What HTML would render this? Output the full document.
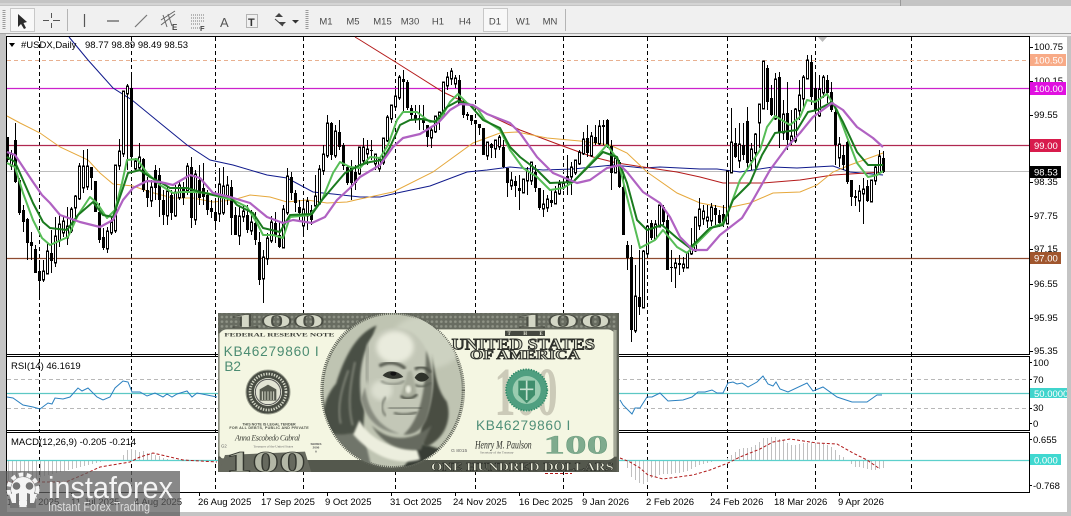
<!DOCTYPE html>
<html><head><meta charset="utf-8"><title>USDX Daily</title>
<style>
html,body{margin:0;padding:0;background:#c4c4c4;width:1071px;height:516px;overflow:hidden}
svg{display:block}
text{font-family:"Liberation Sans",sans-serif}
.t{font-size:9.5px;fill:#000}
.b{font-size:9.5px;fill:#4a4a4a;text-anchor:middle}
.w{font-size:9.5px;fill:#fff}
.s{font-family:"Liberation Serif",serif;font-weight:bold}
</style></head><body>
<svg xmlns="http://www.w3.org/2000/svg" width="1071" height="516" viewBox="0 0 1071 516">
<defs>
<filter id="bl"><feGaussianBlur stdDeviation="3"/></filter>
<filter id="bl2"><feGaussianBlur stdDeviation="7"/></filter>
<clipPath id="ov"><ellipse cx="218" cy="235" rx="212" ry="232"/></clipPath>
<clipPath id="note"><rect x="218" y="313" width="401" height="159"/></clipPath>
<pattern id="eng" width="14" height="14" patternUnits="userSpaceOnUse"><rect width="14" height="14" fill="#686c61"/><circle cx="7" cy="7" r="4" fill="#8f9386"/></pattern>
<path id="wb" d="M11 155V165M43 272V279M47 252V273M55 237V262M59 225V240M63 222V232M67 227V237M71 210V230M75 197V207M79 167V198M83 167V187M87 167V186M107 232V248M111 223V232M115 166V230M119 152V165M123 92V153M127 87V93M135 162V168M139 158V167M151 188V200M167 192V215M175 193V215M179 186V197M187 167V190M195 175V219M219 185V213M223 187V212M227 186V195M239 217V235M243 212V216M251 223V230M263 258V278M267 239V258M271 223V240M283 210V247M287 177V212M303 210V225M307 202V215M315 197V205M319 170V203M323 155V170M327 124V155M335 132V155M359 148V173M363 148V160M367 150V153M375 155V163M379 160V168M383 139V162M387 118V140M391 106V118M395 97V106M399 78V97M431 131V137M435 117V131M439 113V118M443 83V113M447 78V85M451 72V78M455 79V83M487 143V155M495 141V148M499 138V146M511 181V185M523 180V192M527 172V180M531 163V180M543 205V208M547 200V207M555 193V203M559 185V193M563 184V187M571 168V176M575 161V172M579 153V163M583 140V153M591 137V155M599 127V143M615 159V172M635 297V330M643 252V307M647 227V253M655 225V238M659 206V226M675 264V267M683 265V267M687 253V267M691 247V253M695 218V250M699 210V225M703 212V218M707 218V220M711 208V220M727 172V223M731 143V172M739 145V160M751 150V160M755 135V152M759 105V122M763 62V108M775 80V118M783 115V132M791 137V140M795 110V140M799 96V110M803 78V98M807 61V78M819 90V115M823 78V92M839 145V157M859 192V200M863 190V193M871 181V201M875 168V180M879 157V172"/>
</defs>

<!-- window -->
<rect width="1071" height="516" fill="#c4c4c4"/>
<rect x="0" y="3" width="900" height="2" fill="#d4d4d4"/>
<rect x="900" y="0" width="1" height="6" fill="#999"/>
<rect x="0" y="6" width="1071" height="27" fill="#f0f0f0"/>
<rect x="0" y="33" width="1071" height="1" fill="#a4a4a4"/>
<rect x="0" y="34" width="1071" height="2" fill="#ececec"/>
<rect x="0" y="34" width="6" height="2" fill="#c4c4c4"/>

<!-- toolbar -->
<path d="M4 10V30M307 10V30" stroke="#9a9a9a" stroke-width="3" stroke-dasharray="1 1"/>
<rect x="10.500" y="8.500" width="24" height="23" fill="#f8f8f8" stroke="#c8c8c8"/>
<path d="M18 14L18 27L21 24L24 29L26 28L23.500 23L27 22Z" fill="#2c2c2c"/>
<path d="M43 20.500H49M53 20.500H60M51.500 13V18M51.500 23V28" stroke="#555" fill="none"/>
<path d="M67.500 9V31" stroke="#b4b4b4"/>
<path d="M84.500 14V27" stroke="#555" stroke-width="1.200"/>
<path d="M107 21H119" stroke="#555" stroke-width="1.200"/>
<path d="M135 27L147 15" stroke="#777" stroke-width="1.200"/>
<path d="M161 25L175 14M161 20L175 11M163 15L167 27M168 14L172 26" stroke="#666" fill="none"/>
<text x="172" y="30" font-size="8" fill="#444" font-weight="bold">E</text>
<path d="M191 15H204M191 18H204M191 21H204M191 24H200M191 28H200" stroke="#777" stroke-dasharray="1 1"/>
<text x="200" y="31" font-size="7.500" fill="#444" font-weight="bold">F</text>
<text x="220" y="27" font-size="13" fill="#555">A</text>
<rect x="246.500" y="14.500" width="11" height="13" fill="none" stroke="#777" stroke-dasharray="1 1"/>
<text x="248" y="26" font-size="11" font-weight="bold" fill="#333">T</text>
<path d="M275 17L279 13L283 17ZM278 22L282 26L286 22Z" fill="#444"/><path d="M275 19L283 26" stroke="#444"/>
<path d="M292 20H299L295.500 23.500Z" fill="#333"/>
<g class="b"><text class="b" x="326" y="24.500">M1</text><text class="b" x="353" y="24.500">M5</text><text class="b" x="382.500" y="24.500">M15</text><text class="b" x="410" y="24.500">M30</text><text class="b" x="438" y="24.500">H1</text><text class="b" x="465" y="24.500">H4</text></g>
<rect x="483.500" y="8.500" width="24" height="23" fill="#f8f8f8" stroke="#c8c8c8"/>
<text class="b" x="495" y="24.500">D1</text><text class="b" x="523" y="24.500">W1</text><text class="b" x="550" y="24.500">MN</text>
<path d="M565.500 9V31" stroke="#b4b4b4"/>

<!-- panels -->
<rect x="7" y="37" width="1060" height="475" fill="#fff"/>
<path d="M6.500 36.500H1029.500V354.500H6.500ZM6.500 356.500H1029.500V430.500H6.500ZM6.500 432.500H1029.500V492.500H6.500ZM6.500 36V492" fill="none" stroke="#000"/>
<path d="M1029 47h4M1029 81h4M1029 115h4M1029 148h4M1029 182h4M1029 216h4M1029 249h4M1029 284h4M1029 318h4M1029 351h4M1029 362h3M1029 379h3M1029 408h3M1029 423h3M1029 439h3M1029 485h3" stroke="#000" transform="translate(0 .5)"/>
<!-- grid -->
<path d="M39.500 37V492M131.500 37V492M215.500 37V492M303.500 37V492M395.500 37V492M475.500 37V492M563.500 37V492M647.500 37V492M727.500 37V492M815.500 37V492M911.500 37V492" stroke="#000" stroke-dasharray="4 3"/>
<!-- hlines -->
<path d="M7 60.500H1029" stroke="#e8b090" stroke-dasharray="4 3"/>
<path d="M7 88.500H1029" stroke="#cc22cc" stroke-width="1.200"/>
<path d="M7 145.500H1029" stroke="#b02850" stroke-width="1.200"/>
<path d="M7 171.500H1029" stroke="#bdbdbd"/>
<path d="M7 258.500H1029" stroke="#8e4a30" stroke-width="1.200"/>

<!-- MA thin -->
<polyline fill="none" stroke="#101a8c" points="69,37 88,60 113,88 132,100 160,123 187,145 210,160 233,165 267,175 287,178 313,192 333,194 360,197 380,197 397,193 430,186 467,172 487,170 510,167 543,170 573,169 613,165 643,168 660,167 700,169 717,169 740,172 773,167 797,168 833,166 850,172 883,175"/>
<polyline fill="none" stroke="#b41a1a" points="355,37 360,40 397,63 443,92 460,100 493,117 520,130 560,145 593,157 617,163 643,167 677,172 700,177 723,183 763,183 800,180 833,175 883,172"/>
<polyline fill="none" stroke="#e6a83c" points="7,116 20,123 40,133 60,147 88,160 100,173 113,184 133,186 150,192 173,198 193,198 213,202 233,200 250,195 270,197 287,202 307,200 327,203 347,202 360,199 393,192 433,172 473,143 500,133 517,132 547,138 580,141 610,145 627,153 647,172 677,193 700,203 727,208 750,203 773,193 800,192 817,185 833,172 850,165 883,153"/>

<!-- candles -->
<g transform="translate(.5 0)" shape-rendering="crispEdges">
<path fill="none" stroke="#000" d="M7 137V162M11 150V170M15 123V183M19 178V215M23 205V232M27 218V260M31 232V260M35 245V273M39 260V297M43 260V282M47 243V273M51 230V273M55 217V267M59 213V247M63 217V237M67 207V245M71 207V233M75 195V217M79 163V200M83 150V193M87 149V190M91 167V190M95 181V212M99 203V243M103 228V250M107 227V253M111 217V235M115 165V233M119 139V170M123 92V157M127 84V170M131 73V167M135 158V170M139 143V170M143 158V192M147 177V207M151 180V207M155 165V200M159 168V217M163 190V225M167 187V225M171 190V220M175 185V217M179 180V200M183 182V205M187 163V195M191 157V228M195 170V225M199 165V205M203 163V205M207 190V215M211 200V218M215 198V230M219 168V222M223 167V215M227 176V205M231 180V235M235 207V235M239 207V245M243 205V222M247 205V233M251 210V235M255 212V245M259 232V285M263 250V303M267 233V265M271 216V243M275 212V243M279 222V248M283 205V248M287 168V215M291 172V200M295 190V212M299 200V222M303 200V237M307 197V230M311 205V225M315 175V207M319 165V205M323 145V175M327 115V158M331 122V160M335 125V158M339 120V150M343 143V170M347 165V185M351 160V200M355 165V190M359 148V175M363 138V165M367 140V165M371 140V160M375 155V170M379 160V172M383 140V165M387 115V142M391 106V123M395 90V110M399 75V100M403 70V111M407 80V110M411 105V120M415 105V123M419 105V130M423 105V130M427 125V147M431 128V148M435 117V133M439 113V130M443 83V113M447 72V90M451 68V85M455 75V88M459 75V105M463 100V118M467 112V120M471 115V125M475 120V145M479 124V135M483 128V155M487 143V160M491 143V158M495 140V158M499 135V150M503 140V168M507 168V197M511 172V190M515 176V197M519 175V210M523 180V193M527 167V195M531 163V185M535 165V192M539 188V210M543 190V217M547 195V212M551 190V207M555 186V203M559 180V195M563 178V190M567 155V195M571 162V195M575 160V175M579 150V165M583 132V155M587 125V157M591 132V157M595 125V145M599 120V145M603 120V145M607 119V148M611 140V190M615 158V172M619 160V188M623 175V235M627 241V270M631 245V342M635 265V333M639 250V315M643 250V308M647 225V255M651 220V240M655 220V240M659 205V226M663 205V225M667 215V270M671 250V282M675 258V288M679 255V275M683 257V272M687 253V268M691 228V255M695 218V252M699 198V230M703 205V225M707 205V228M711 203V226M715 205V225M719 210V227M723 205V227M727 172V224M731 108V172M735 128V158M739 123V168M743 123V160M747 107V168M751 143V170M755 133V170M759 105V148M763 61V108M767 65V110M771 85V116M775 73V120M779 72V148M783 100V140M787 82V150M791 110V145M795 108V143M799 80V120M803 75V108M807 55V78M811 55V105M815 72V130M819 75V117M823 75V98M827 75V103M831 82V112M835 110V165M839 137V167M843 145V170M847 141V184M851 180V206M855 190V206M859 185V212M863 178V224M867 180V202M871 180V202M875 165V185M879 150V172M883 151V173"/>
<path fill="none" stroke="#000" stroke-width="3" d="M7 137V160M15 140V182M19 180V213M23 210V222M27 219V243M31 242V246M35 249V273M39 271V281M51 253V261M91 167V178M95 181V212M99 212V240M103 237V248M131 88V157M143 159V190M147 190V198M155 170V188M159 175V200M163 200V215M171 195V213M183 188V198M191 167V218M199 180V198M203 188V197M207 195V210M211 208V212M215 212V221M231 187V218M235 215V235M247 215V230M255 223V240M259 242V280M275 223V235M279 235V247M291 177V193M295 193V203M299 207V213M311 210V220M331 123V155M339 132V147M343 145V166M347 167V183M351 167V183M355 172V183M371 150V151M403 79V82M407 82V108M411 108V115M415 115V120M419 118V120M423 120V123M427 125V137M459 80V105M463 105V115M467 114V116M471 115V121M475 120V124M479 124V128M483 128V155M491 144V148M503 147V167M507 168V183M515 181V186M519 188V191M535 172V188M539 188V208M551 200V203M567 176V182M587 138V153M595 137V143M603 125V127M607 120V147M611 146V173M619 162V187M623 187V235M627 245V258M631 257V330M639 297V307M651 223V238M663 207V222M667 220V270M671 267V268M679 263V265M715 208V215M719 215V223M723 214V223M735 143V157M743 145V155M747 121V163M767 68V102M771 98V115M779 77V132M787 113V140M811 62V97M815 88V110M827 80V93M831 92V110M835 112V145M843 155V165M847 142V182M851 180V197M855 196V198M867 186V201M883 158V172"/>
<use href="#wb" fill="none" stroke="#000" stroke-width="3" stroke-linecap="square"/>
<use href="#wb" fill="none" stroke="#fff" stroke-width="1"/>
</g>

<!-- MA thick -->
<polyline fill="none" stroke="#56bd56" stroke-width="2" stroke-linejoin="round" points="7,163 15,167 23,193 33,220 42,238 50,245 68,237 78,215 90,197 97,203 107,218 115,210 122,183 127,160 137,159 147,173 160,185 173,193 182,192 193,192 207,193 220,197 233,200 247,207 257,223 263,235 273,235 283,238 290,217 310,215 322,200 333,173 340,162 350,167 360,168 370,157 380,158 388,145 397,120 403,112 417,112 430,122 440,120 450,102 458,94 467,103 477,108 485,120 500,130 510,150 523,168 537,177 550,190 563,188 573,182 587,167 607,145 618,160 627,197 640,248 655,240 663,230 677,247 687,253 700,240 713,227 723,223 730,207 740,180 760,150 767,127 775,116 790,125 800,117 807,100 815,102 827,94 837,110 847,137 857,163 868,177 877,175 883,171"/>
<polyline fill="none" stroke="#1a7a1e" stroke-width="2" stroke-linejoin="round" points="7,157 15,162 23,180 33,203 43,222 50,228 67,230 78,215 93,202 103,215 113,217 123,188 128,173 140,170 150,177 160,182 170,188 187,188 200,192 213,195 230,197 237,205 253,213 263,228 280,232 290,215 312,214 322,200 333,187 345,173 360,165 370,162 382,160 390,147 400,125 410,120 422,119 435,122 447,107 458,101 470,105 483,120 500,128 510,147 520,157 537,170 550,183 573,182 590,165 603,152 617,157 627,183 637,220 647,230 662,225 677,238 690,248 700,238 710,228 723,225 733,200 750,183 762,155 775,133 797,130 808,112 817,110 832,102 843,122 857,152 868,165 883,165"/>
<polyline fill="none" stroke="#b062c2" stroke-width="2.200" stroke-linejoin="round" points="7,152 15,155 23,167 33,182 42,195 50,203 60,215 80,222 100,227 113,220 123,200 133,188 147,181 160,182 173,185 190,175 200,178 213,193 230,197 250,203 267,217 283,223 293,220 312,223 325,217 337,200 350,188 360,177 380,165 393,147 403,138 420,134 438,123 450,110 460,104 473,105 487,114 510,123 520,133 537,157 553,173 577,183 590,180 607,168 620,165 627,172 643,192 660,203 670,217 680,237 693,250 707,250 720,235 742,218 753,200 770,170 787,147 800,133 813,117 832,103 843,110 857,127 873,138 883,147"/>
<path d="M818 37H827L822.500 42Z" fill="#bbb"/>

<!-- RSI -->
<path d="M7 379.500H1029M7 408.500H1029" stroke="#b8b8b8" stroke-dasharray="4 3"/>
<path d="M7 393.500H1029" stroke="#5cc8c4" stroke-width="1.200"/>
<polyline fill="none" stroke="#2a80c0" points="7,397 13,398 23,405 33,407 40,409 48,403 52,404 55,398 63,399 70,397 78,388 82,391 88,388 97,397 103,400 110,397 115,388 123,381 128,382 132,392 140,392 147,396 155,393 163,397 167,394 172,397 177,394 187,391 192,397 197,393 207,395 217,397"/>
<polyline fill="none" stroke="#2a80c0" points="620,400 623,405 632,414 635,408 640,408 647,397 652,397 660,393 668,401 683,400 692,397 698,392 705,392 712,390 717,393 723,393 728,383 733,382 737,384 742,383 748,387 757,382 763,376 768,384 773,386 776,382 780,389 788,392 807,383 813,391 823,387 837,397 852,402 867,402 877,395 882,395"/>

<!-- MACD -->
<path stroke="#c0c0c0" fill="none" d="M8.500 460V482M12.500 460V482M16.500 460V481M20.500 460V480M24.500 460V480M28.500 460V479M32.500 460V478M36.500 460V478M40.500 460V477M44.500 460V476M48.500 460V475M52.500 460V474M56.500 460V473M60.500 460V472M64.500 460V471M68.500 460V470M72.500 460V469M76.500 460V468M80.500 460V467M84.500 460V466M88.500 460V465M92.500 460V464M96.500 460V463M100.500 460V462M104.500 460V461M123.500 460V455M127.500 460V450M131.500 460V449M135.500 460V450M139.500 460V452M143.500 460V451M147.500 460V453M151.500 460V453M155.500 460V455M159.500 460V456M163.500 460V458M167.500 460V459M627.500 460V468M631.500 460V477M635.500 460V480M639.500 460V483M643.500 460V484M647.500 460V482M651.500 460V478M655.500 460V477M659.500 460V475M663.500 460V474M667.500 460V474M671.500 460V474M675.500 460V473M679.500 460V473M683.500 460V472M687.500 460V471M691.500 460V469M695.500 460V467M699.500 460V465M703.500 460V464M707.500 460V463M711.500 460V462M715.500 460V461M727.500 460V458M731.500 460V455M735.500 460V452M739.500 460V449M743.500 460V448M747.500 460V448M751.500 460V447M755.500 460V445M759.500 460V442M763.500 460V438M767.500 460V438M771.500 460V437M775.500 460V437M779.500 460V439M783.500 460V440M787.500 460V443M791.500 460V445M795.500 460V445M799.500 460V444M803.500 460V443M807.500 460V443M811.500 460V442M815.500 460V443M819.500 460V443M823.500 460V444M827.500 460V445M831.500 460V447M835.500 460V450M839.500 460V455M843.500 460V457M851.500 460V464M855.500 460V467M859.500 460V467M863.500 460V468M867.500 460V469M871.500 460V470M875.500 460V470M879.500 460V469M883.500 460V468"/>
<path d="M7 460.500H1029" stroke="#5cd0cc" stroke-width="1.200"/>
<polyline fill="none" stroke="#b01818" stroke-dasharray="3 2" points="7,482 33,482 66,482 87,473 100,467 130,462 140,457 153,453 170,457 183,460 217,462"/>
<polyline fill="none" stroke="#b01818" stroke-dasharray="3 2" points="620,458 630,462 640,468 648,475 663,479 678,477 693,475 710,470 728,463 740,457 760,449 773,442 790,439 817,443 837,444 853,453 867,460 880,469"/>
<path d="M545 473.500H572" stroke="#b01818" stroke-dasharray="3 2"/>

<!-- Labels -->
<text class="t" x="21" y="48">#USDX,Daily</text><text class="t" x="85" y="48">98.77 98.89 98.49 98.53</text>
<path d="M9 43H15L12 47Z" fill="#000"/>
<text class="t" x="11" y="369">RSI(14) 46.1619</text>
<text class="t" x="11" y="445">MACD(12,26,9) -0.205 -0.214</text>
<g>
<text class="t" x="1034" y="50">100.75</text><text class="t" x="1034" y="84">100.15</text><text class="t" x="1034" y="118">99.55</text><text class="t" x="1034" y="152">98.95</text><text class="t" x="1034" y="185">98.35</text><text class="t" x="1034" y="219">97.75</text><text class="t" x="1034" y="252">97.15</text><text class="t" x="1034" y="287">96.55</text><text class="t" x="1034" y="321">95.95</text><text class="t" x="1034" y="354">95.35</text>
<text class="t" x="1033" y="366">100</text><text class="t" x="1033" y="383">70</text><text class="t" x="1033" y="411">30</text><text class="t" x="1033" y="427">0</text>
<text class="t" x="1033" y="443">0.655</text><text class="t" x="1033" y="489">-0.768</text>
</g>
<rect x="1030" y="54" width="36" height="12" fill="#f8aa86"/><text class="w" x="1034" y="63.500">100.50</text>
<rect x="1030" y="82" width="36" height="13" fill="#e010e0"/><text class="w" x="1034" y="92">100.00</text>
<rect x="1030" y="139" width="31" height="13" fill="#d81c4c"/><text class="w" x="1034" y="149">99.00</text>
<rect x="1030" y="166" width="31" height="12" fill="#000"/><text class="w" x="1034" y="175.500">98.53</text>
<rect x="1030" y="252" width="31" height="12" fill="#a0562e"/><text class="w" x="1034" y="261.500">97.00</text>
<rect x="1030" y="388" width="37" height="10" fill="#40d4cc"/><text class="w" x="1034" y="397">50.0000</text>
<rect x="1030" y="454" width="31" height="11" fill="#40d8d0"/><text class="w" x="1034" y="463.500">0.000</text>

<!-- dates -->
<path d="M7.500 492v4M71.500 492v4M135.500 492v4M199.500 492v4M263.500 492v4M327.500 492v4M391.500 492v4M455.500 492v4M519.500 492v4M583.500 492v4M647.500 492v4M711.500 492v4M775.500 492v4M839.500 492v4" stroke="#000"/>
<g>
<text class="t" x="7" y="505">19 Jun 2025</text><text class="t" x="71" y="505">11 Jul 2025</text><text class="t" x="134" y="505">4 Aug 2025</text><text class="t" x="198" y="505">26 Aug 2025</text><text class="t" x="261" y="505">17 Sep 2025</text><text class="t" x="325" y="505">9 Oct 2025</text><text class="t" x="390" y="505">31 Oct 2025</text><text class="t" x="453" y="505">24 Nov 2025</text><text class="t" x="519" y="505">16 Dec 2025</text><text class="t" x="582" y="505">9 Jan 2026</text><text class="t" x="646" y="505">2 Feb 2026</text><text class="t" x="710" y="505">24 Feb 2026</text><text class="t" x="774" y="505">18 Mar 2026</text><text class="t" x="838" y="505">9 Apr 2026</text>
</g>
<rect x="0" y="512" width="1071" height="4" fill="#c4c4c4"/>
<rect x="1067" y="36" width="4" height="480" fill="#c4c4c4"/>

<!-- logo -->
<rect x="0" y="471" width="180" height="45" fill="#5e5e5e" fill-opacity=".74"/>
<rect x="180" y="512" width="12" height="4" fill="#c4c4c4"/>
<circle cx="23" cy="489" r="12" fill="#f4f4f4"/>
<circle cx="23" cy="489" r="14.500" fill="none" stroke="#f4f4f4" stroke-width="4" stroke-dasharray="4.500 3.500"/>
<circle cx="16.500" cy="486" r="3.800" fill="#747474"/>
<circle cx="29.500" cy="486" r="3.800" fill="#747474"/>
<path d="M10 496L19 493L19 508L10 508ZM36 496L27 493L27 508L36 508Z" fill="#747474"/>
<rect x="19.500" y="492" width="7" height="15" fill="#f4f4f4"/>
<path d="M9 494h7v9h-4ZM37 494h-7v9h4Z" fill="#f4f4f4"/>
<text x="48" y="498" font-size="31" fill="#f4f4f4" textLength="125" lengthAdjust="spacingAndGlyphs">instaforex</text>
<text x="48" y="511" font-size="12.500" fill="#dcdcdc" textLength="102" lengthAdjust="spacingAndGlyphs">Instant Forex Trading</text>

<!-- banknote -->
<g clip-path="url(#note)">
<rect x="218" y="313" width="401" height="159" fill="#5f6358"/>
<g transform="translate(215 310) scale(.33333)">
<rect x="10" y="10" width="1195" height="50" fill="url(#eng)"/>
<rect x="10" y="440" width="1195" height="50" fill="#54584d"/>
<rect x="10" y="58" width="1193" height="392" rx="26" fill="#f4f6e2"/>
<rect x="10" y="70" width="4" height="370" fill="#8a8e80"/>
<rect x="1195" y="60" width="10" height="380" fill="#a4a898"/>
<text class="s" x="40" y="53" font-size="60" fill="#d4d7c6" stroke="#4a4d44" stroke-width="2" textLength="290" lengthAdjust="spacingAndGlyphs">100</text>
<text class="s" x="900" y="53" font-size="60" fill="#d4d7c6" stroke="#4a4d44" stroke-width="2" textLength="290" lengthAdjust="spacingAndGlyphs">100</text>
<text class="s" x="28" y="80" font-size="17" fill="#3c3f38" textLength="330" lengthAdjust="spacingAndGlyphs">FEDERAL RESERVE NOTE</text>
<text x="26" y="138" font-size="41" fill="#4c8c72" textLength="285">KB46279860 I</text>
<text x="28" y="183" font-size="41" fill="#4c8c72">B2</text>
<text x="783" y="360" font-size="41" fill="#4f8f78" textLength="283">KB46279860 I</text>
<!-- seal -->
<circle cx="159" cy="246" r="66" fill="#484c43"/><circle cx="159" cy="246" r="66" fill="none" stroke="#9ea292" stroke-width="3"/>
<circle cx="159" cy="246" r="54" fill="none" stroke="#d3d6c6" stroke-width="8" stroke-dasharray="4 4"/>
<circle cx="159" cy="246" r="42" fill="#e2e4d4"/><circle cx="159" cy="246" r="38" fill="none" stroke="#555" stroke-width="3"/>
<path d="M134 272V238L159 224L184 238V272Z" fill="#55594e"/><path d="M142 244V270M150 244V270M159 244V270M168 244V270M176 244V270" stroke="#d8dacb" stroke-width="3"/>
<text x="162" y="346" font-size="11" font-weight="bold" fill="#4c5047" text-anchor="middle">THIS NOTE IS LEGAL TENDER</text>
<text x="162" y="357" font-size="11" font-weight="bold" fill="#4c5047" text-anchor="middle" textLength="238">FOR ALL DEBTS, PUBLIC AND PRIVATE</text>
<text x="60" y="392" font-size="24" font-style="italic" fill="#44473f" textLength="195" style="font-family:'Liberation Serif',serif">Anna Escobedo Cabral</text>
<text x="115" y="412" font-size="10" fill="#666" style="font-family:'Liberation Serif',serif">Treasurer of the United States</text>
<text x="18" y="412" font-size="13" fill="#666">G2</text>
<text x="303" y="405" font-size="9" font-weight="bold" fill="#555" text-anchor="middle">SERIES</text><text x="303" y="416" font-size="9" font-weight="bold" fill="#555" text-anchor="middle">2006</text><text x="303" y="427" font-size="9" font-weight="bold" fill="#555" text-anchor="middle">A</text>
<rect x="10" y="445" width="25" height="45" fill="#66695e"/>
<path d="M30 435L270 425L290 490H10Z" fill="#66695e"/>
<text class="s" x="32" y="486" font-size="92" fill="#b3b7a6" stroke="#33362f" stroke-width="2.500" textLength="240" lengthAdjust="spacingAndGlyphs">100</text>
<!-- title -->
<rect x="870" y="62" width="120" height="16" fill="#44473f"/>
<text class="s" x="878" y="75" font-size="14" fill="#f0f1df" textLength="105" lengthAdjust="spacing">THE</text>
<text class="s" x="710" y="118" font-size="48" fill="#dfe2cf" stroke="#2b2d28" stroke-width="2.800" textLength="430" lengthAdjust="spacingAndGlyphs">UNITED STATES</text>
<text class="s" x="765" y="147" font-size="38" fill="#dfe2cf" stroke="#2b2d28" stroke-width="2.600" textLength="330" lengthAdjust="spacingAndGlyphs">OF AMERICA</text>
<!-- watermark 100 -->
<text class="s" x="838" y="315" font-size="205" font-weight="normal" fill="#cbcab8" textLength="190" lengthAdjust="spacingAndGlyphs">100</text>
<circle cx="935" cy="240" r="62" fill="#4f9f80"/>
<circle cx="935" cy="240" r="62" fill="none" stroke="#2f8a68" stroke-width="5" stroke-dasharray="4 4"/>
<circle cx="935" cy="240" r="42" fill="#9accb0"/>
<path d="M910 212H960V255L935 280L910 255Z" fill="#3f8e6c"/><path d="M935 212V270M915 238H955" stroke="#c5e0cf" stroke-width="5"/>
<!-- signature -->
<text x="780" y="415" font-size="36" font-style="italic" fill="#2f312c" textLength="170" lengthAdjust="spacingAndGlyphs" style="font-family:'Liberation Serif',serif">Henry M. Paulson</text>
<text x="795" y="430" font-size="10" fill="#666" style="font-family:'Liberation Serif',serif">Secretary of the Treasury</text>
<text x="708" y="426" font-size="15" fill="#666">G 8015</text>
<text class="s" x="985" y="430" font-size="78" fill="#7fab8e" stroke="#5f9274" stroke-width="1" textLength="195" lengthAdjust="spacingAndGlyphs">100</text>
<text class="s" x="648" y="481" font-size="36" fill="#e8ead8" stroke="#22241f" stroke-width="1.400" textLength="548" lengthAdjust="spacingAndGlyphs">ONE HUNDRED DOLLARS</text>
</g>
<!-- portrait -->
<g transform="translate(320 312) scale(.33333)">
<ellipse cx="218" cy="235" rx="212" ry="232" fill="#bfc4b2"/>
<ellipse cx="218" cy="235" rx="212" ry="232" fill="none" stroke="#5f6358" stroke-width="10" stroke-dasharray="3 3"/>
<g clip-path="url(#ov)">
<ellipse cx="320" cy="90" rx="110" ry="80" fill="#cdd2c1" filter="url(#bl2)"/>
<!-- coat -->
<path d="M15 330L120 320L160 490L40 490Z" fill="#70746a" filter="url(#bl)"/>
<path d="M300 392L385 420L360 490L235 490Z" fill="#383c34" filter="url(#bl)"/>
<!-- hair -->
<path d="M170 40C105 65 70 145 48 215C18 250 0 300 18 350C50 385 90 355 130 365C130 310 140 260 135 200C135 130 150 90 170 40Z" fill="#4a4f44" filter="url(#bl)"/>
<path d="M85 175C65 230 50 285 62 335M105 150C90 220 82 280 98 340" stroke="#878b7e" stroke-width="5" fill="none" filter="url(#bl)"/>
<path d="M335 125C345 185 352 235 380 268C396 315 380 378 318 405C292 392 302 340 318 300C333 250 343 190 335 125Z" fill="#484d42" filter="url(#bl)"/>
<!-- cravat -->
<path d="M118 325C150 380 205 410 290 410L300 442C225 465 150 425 100 368Z" fill="#eceede" filter="url(#bl)"/>
<path d="M275 474L340 445L375 485L265 486Z" fill="#e6e8d6"/>
<!-- neck shadow -->
<path d="M155 340C200 385 270 395 335 340L302 414C240 418 190 400 155 340Z" fill="#666a5e" filter="url(#bl)"/>
<!-- head -->
<path d="M138 110C150 55 225 26 282 66C322 98 344 160 338 230C328 312 302 374 250 368C190 362 138 332 123 260C116 200 123 150 138 110Z" fill="#c3c7b7" filter="url(#bl)"/>
<ellipse cx="225" cy="105" rx="56" ry="48" fill="#e9ebdd" filter="url(#bl2)"/>
<ellipse cx="185" cy="235" rx="32" ry="30" fill="#dcdfd0" filter="url(#bl2)"/>
<path d="M318 115C345 180 342 250 320 322C302 362 270 370 250 368C292 330 318 260 318 115Z" fill="#6d7165" filter="url(#bl)"/>
<path d="M135 225C145 300 180 348 240 365C190 362 138 332 123 260Z" fill="#878b7f" filter="url(#bl)"/>
<path d="M145 100C140 140 135 170 140 210" stroke="#8d9185" stroke-width="10" fill="none" filter="url(#bl2)"/>
<!-- brows -->
<path d="M178 162C205 146 235 152 256 170" stroke="#585c51" stroke-width="10" fill="none" filter="url(#bl)"/>
<path d="M285 172C300 160 320 165 332 182" stroke="#4f5349" stroke-width="9" fill="none" filter="url(#bl)"/>
<!-- eyes -->
<path d="M188 190C205 170 235 176 250 195C230 203 205 203 188 190Z" fill="#33362f"/>
<ellipse cx="220" cy="185" rx="9" ry="6" fill="#111"/>
<path d="M183 207C205 220 235 220 254 206" stroke="#7c8074" stroke-width="5" fill="none" filter="url(#bl)"/>
<path d="M284 197C295 176 316 178 327 197C315 213 295 213 284 197Z" fill="#2f322b"/>
<path d="M284 218C300 228 316 225 332 212" stroke="#5a5e53" stroke-width="6" fill="none" filter="url(#bl)"/>
<!-- nose -->
<path d="M262 180C258 210 245 235 243 250C255 262 275 262 290 245C285 215 280 195 275 175" fill="#a9ad9d" filter="url(#bl)"/>
<path d="M242 252C255 263 275 263 292 247" stroke="#34372f" stroke-width="6" fill="none" filter="url(#bl)"/>
<ellipse cx="265" cy="232" rx="8" ry="12" fill="#e9ebdd" filter="url(#bl)"/>
<!-- mouth -->
<path d="M205 288C235 292 270 284 304 288" stroke="#2f322b" stroke-width="6" fill="none" filter="url(#bl)"/>
<path d="M222 302C245 312 270 308 292 300" stroke="#6d7165" stroke-width="8" fill="none" filter="url(#bl)"/>
<path d="M198 255C182 275 182 295 198 312" stroke="#767a6e" stroke-width="6" fill="none" filter="url(#bl)"/>
</g>
</g>
</g>
</svg>
</body></html>
